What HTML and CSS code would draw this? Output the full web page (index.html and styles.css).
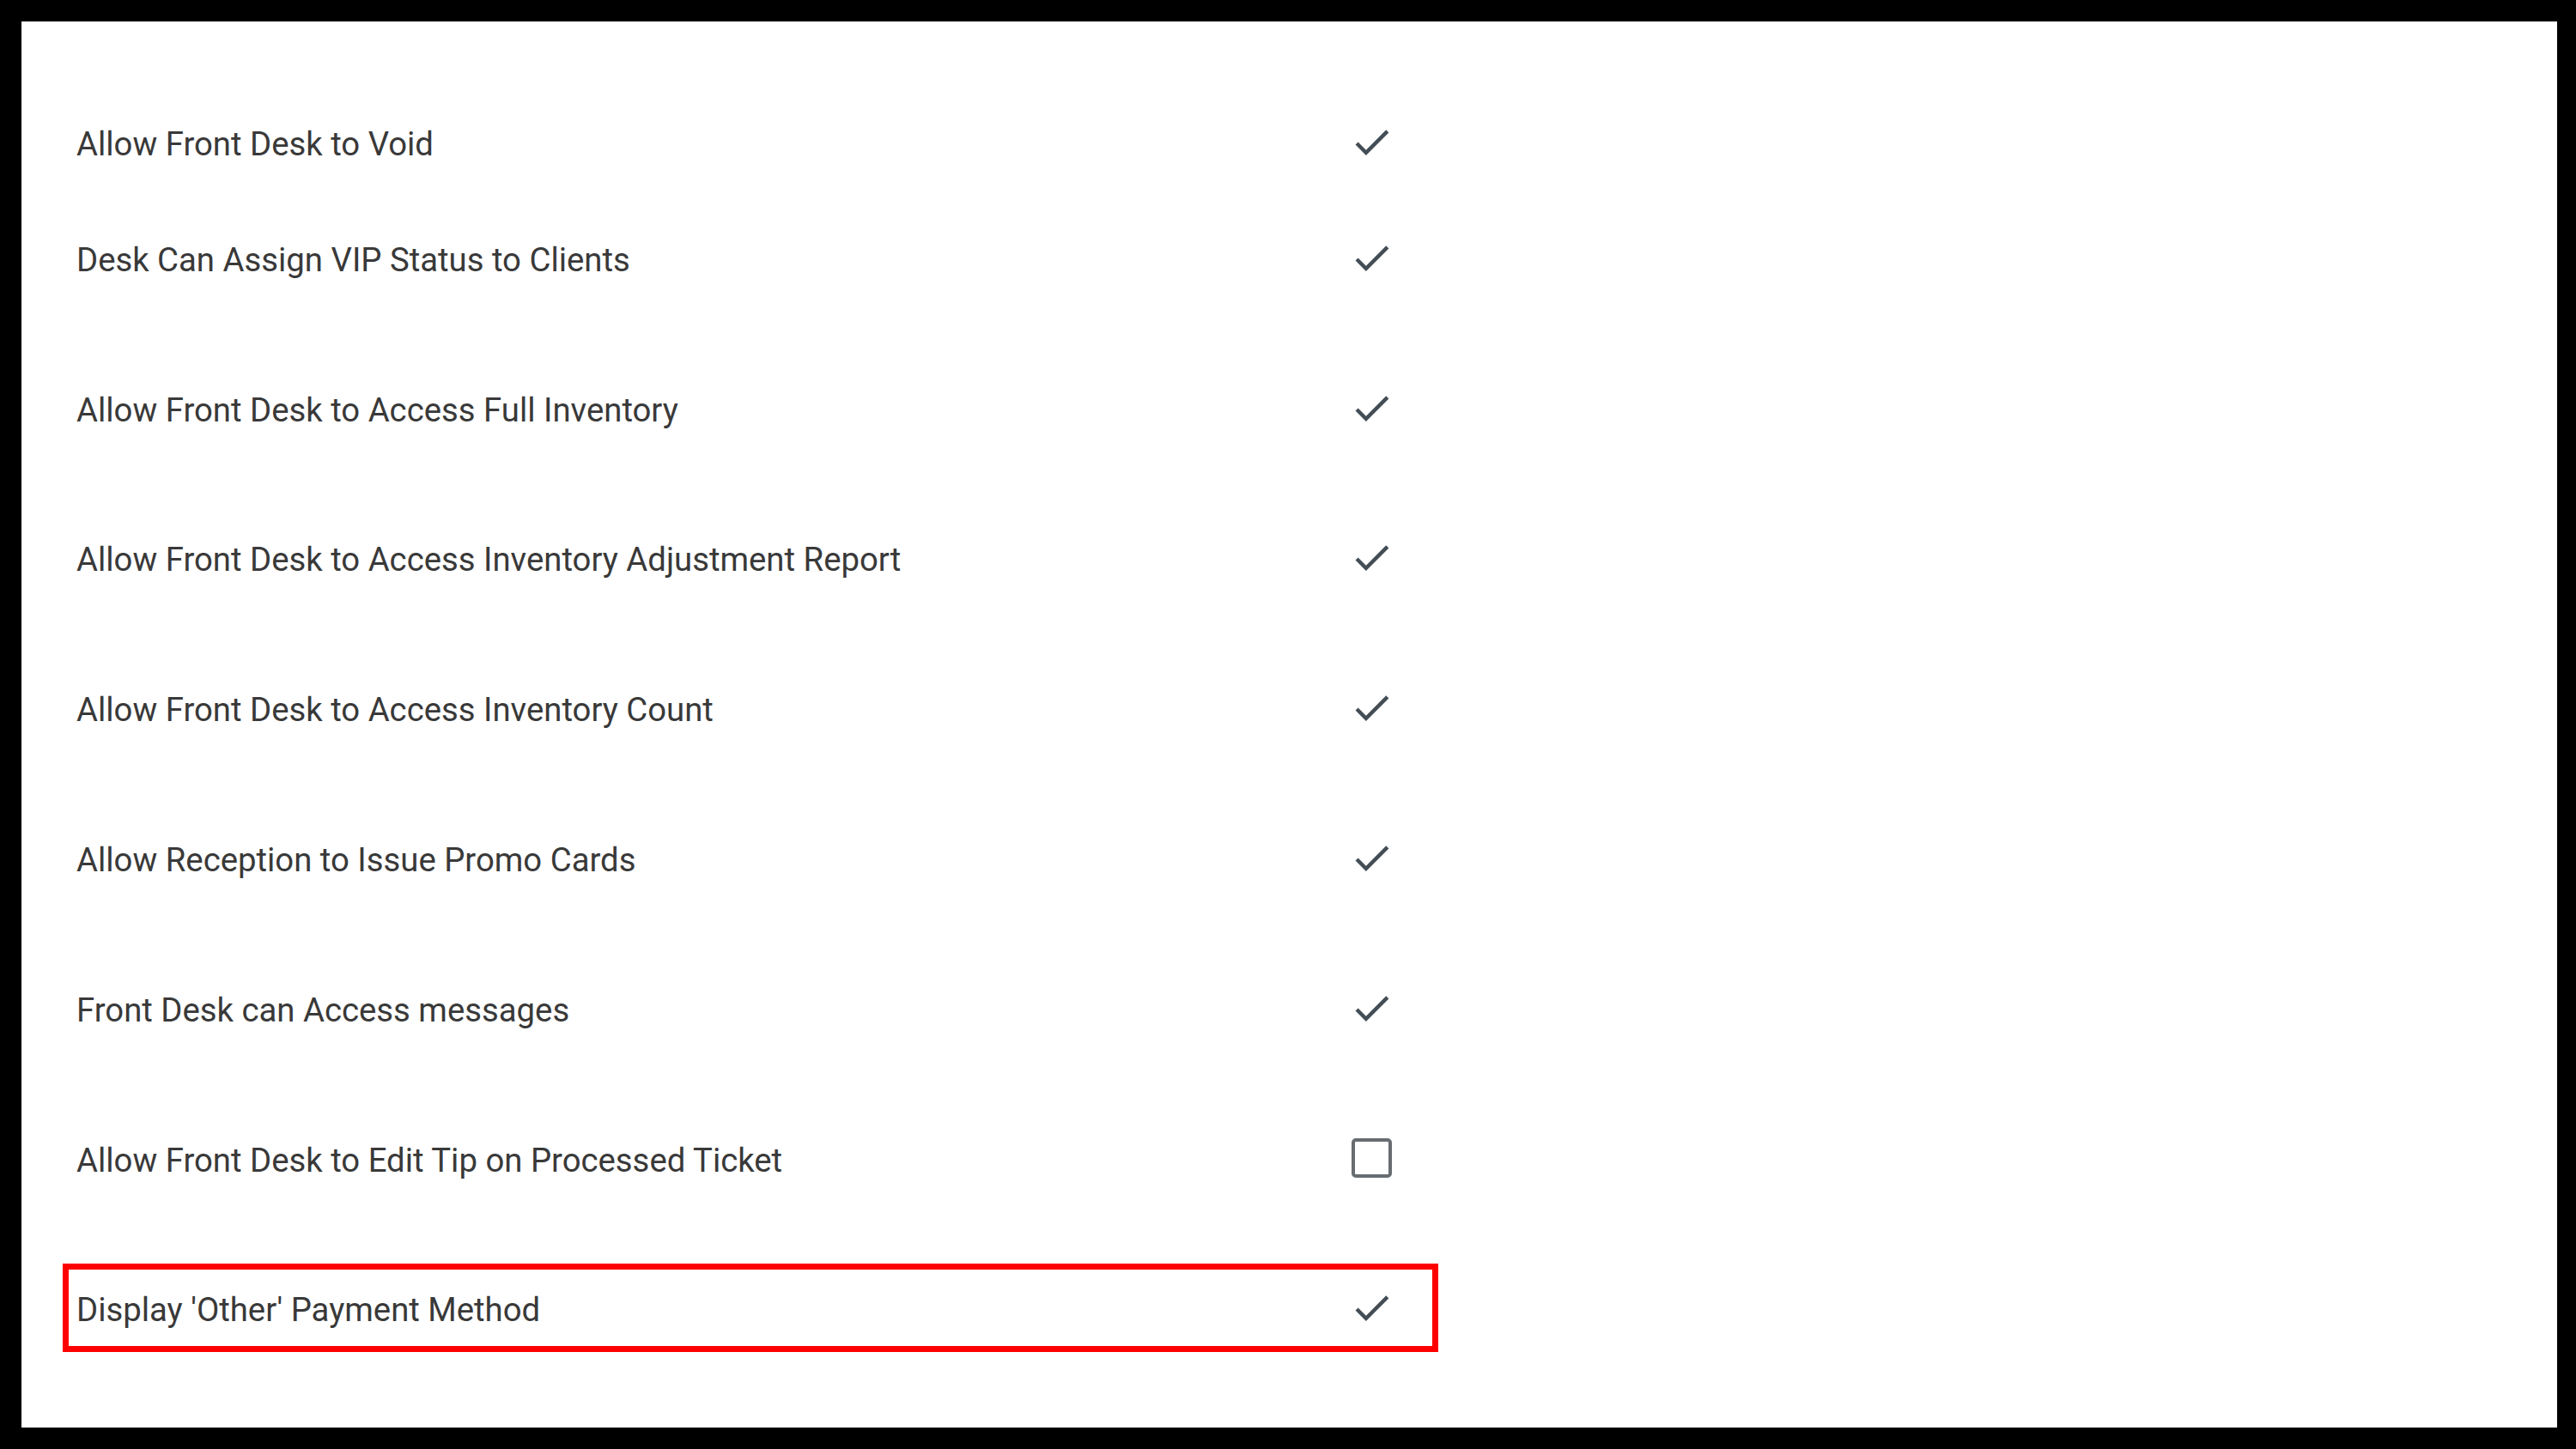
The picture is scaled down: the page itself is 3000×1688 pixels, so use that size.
FILE: index.html
```html
<!DOCTYPE html>
<html lang="en">
<head>
  <meta charset="UTF-8">
  <meta name="viewport" content="width=device-width, initial-scale=1.0">
  <title>Front Desk Permissions</title>
  <link rel="stylesheet" href="styles.css">
</head>
<body>
  <main class="panel">
    <div class="list">
      <div class="row">
        <span class="label">Allow Front Desk to Void</span>
        <span class="mark"><svg viewBox="0 0 24 24"><path d="M9 16.17L4.83 12l-1.42 1.41L9 19 21 7l-1.41-1.41z"/></svg></span>
      </div>
      <div class="row">
        <span class="label">Desk Can Assign VIP Status to Clients</span>
        <span class="mark"><svg viewBox="0 0 24 24"><path d="M9 16.17L4.83 12l-1.42 1.41L9 19 21 7l-1.41-1.41z"/></svg></span>
      </div>
      <div class="row">
        <span class="label">Allow Front Desk to Access Full Inventory</span>
        <span class="mark"><svg viewBox="0 0 24 24"><path d="M9 16.17L4.83 12l-1.42 1.41L9 19 21 7l-1.41-1.41z"/></svg></span>
      </div>
      <div class="row">
        <span class="label">Allow Front Desk to Access Inventory Adjustment Report</span>
        <span class="mark"><svg viewBox="0 0 24 24"><path d="M9 16.17L4.83 12l-1.42 1.41L9 19 21 7l-1.41-1.41z"/></svg></span>
      </div>
      <div class="row">
        <span class="label">Allow Front Desk to Access Inventory Count</span>
        <span class="mark"><svg viewBox="0 0 24 24"><path d="M9 16.17L4.83 12l-1.42 1.41L9 19 21 7l-1.41-1.41z"/></svg></span>
      </div>
      <div class="row">
        <span class="label">Allow Reception to Issue Promo Cards</span>
        <span class="mark"><svg viewBox="0 0 24 24"><path d="M9 16.17L4.83 12l-1.42 1.41L9 19 21 7l-1.41-1.41z"/></svg></span>
      </div>
      <div class="row">
        <span class="label">Front Desk can Access messages</span>
        <span class="mark"><svg viewBox="0 0 24 24"><path d="M9 16.17L4.83 12l-1.42 1.41L9 19 21 7l-1.41-1.41z"/></svg></span>
      </div>
      <div class="row">
        <span class="label">Allow Front Desk to Edit Tip on Processed Ticket</span>
        <span class="mark"><span class="box"></span></span>
      </div>
      <div class="row highlight">
        <span class="label">Display 'Other' Payment Method</span>
        <span class="mark"><svg viewBox="0 0 24 24"><path d="M9 16.17L4.83 12l-1.42 1.41L9 19 21 7l-1.41-1.41z"/></svg></span>
      </div>
    </div>
  </main>
</body>
</html>
```

FILE: styles.css
```css
* { box-sizing: border-box; font-family: Roboto, 'Liberation Sans', sans-serif; }
body { margin: 0; background: #000; }
.panel { margin: 25px 22px 25px 25px; height: 1638px; background: #fff; padding: 96px 0 0 55px; }
.list { width: 1588px; display: flex; flex-direction: column; gap: 85.8px; }
.row { display: flex; align-items: center; justify-content: space-between; height: 89px; padding: 0 44px 0 9px; }
.row:first-child { margin-bottom: -40px; }
.label { font-size: 38.3px; color: #393939; margin-top: 4px; }
.mark { width: 54px; height: 54px; display: flex; align-items: center; justify-content: center; }
.mark svg { width: 53px; height: 53px; fill: #434d55; }
.box { width: 47px; height: 46px; border: 4px solid #686d71; border-radius: 5px; }
.highlight { outline: 7px solid #ff0000; }
```
